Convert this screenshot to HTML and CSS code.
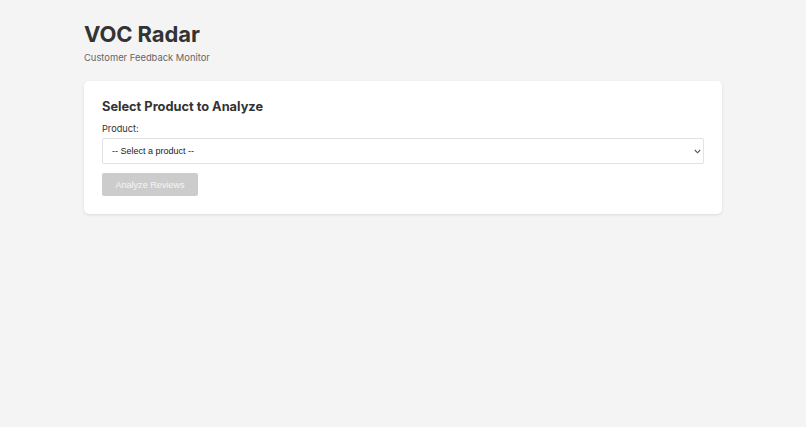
FILE: index.html
```html
<!DOCTYPE html>
<html lang="en">
<head>
<meta charset="utf-8">
<title>VOC Radar</title>
<link rel="stylesheet" href="styles.css">
</head>
<body>
<div class="container">
  <header class="header">
    <h1 class="title">VOC Radar</h1>
    <p class="subtitle">Customer Feedback Monitor</p>
  </header>
  <section class="card">
    <h2 class="card-title">Select Product to Analyze</h2>
    <label class="label" for="product">Product:</label>
    <div class="select-wrap">
      <select id="product" class="select">
        <option>-- Select a product --</option>
      </select>
      <svg class="chev" width="7" height="5" viewBox="0 0 7 5"><path d="M0.8 1 L3.5 3.8 L6.2 1" fill="none" stroke="#555" stroke-width="1.1"/></svg>
    </div>
    <button class="btn" disabled>Analyze Reviews</button>
  </section>
</div>
</body>
</html>
```
FILE: styles.css
```css
html, body {
  margin: 0;
  padding: 0;
  background: #f4f4f4;
  height: 100%;
}
body {
  font-family: Inter, "Noto Sans", sans-serif;
  color: #333;
}
.container {
  width: 638px;
  margin: 0 auto;
  padding-top: 20px;
}
.header {
  margin-bottom: 16px;
}
.title {
  font-size: 22px;
  font-weight: 700;
  margin: 0;
  line-height: 28px;
  color: #333;
  letter-spacing: -0.1px;
}
.subtitle {
  font-size: 9.4px;
  color: #666;
  margin: 3px 0 0 0;
  line-height: 14px;
}
.card {
  background: #fff;
  border-radius: 5px;
  box-shadow: 0 1px 3px rgba(0,0,0,0.1);
  padding: 17px 18px 18px 18px;
  display: flex;
  flex-direction: column;
  align-items: flex-start;
}
.card-title {
  font-size: 12.8px;
  font-weight: 700;
  margin: 0 0 7px 0;
  line-height: 18px;
  color: #333;
}
.label {
  font-size: 9.2px;
  line-height: 12px;
  color: #333;
  margin-bottom: 3px;
}
.select-wrap {
  position: relative;
  width: 100%;
  margin-bottom: 9px;
}
.select {
  appearance: none;
  -webkit-appearance: none;
  width: 100%;
  height: 26px;
  box-sizing: border-box;
  border: 1px solid #e2e2e2;
  border-radius: 2px;
  background: #fff;
  font-family: "Liberation Sans", Arial, sans-serif;
  font-size: 9px;
  color: #222;
  padding: 0 9px;
  margin: 0;
}
.chev {
  position: absolute;
  right: 3px;
  top: 11px;
  pointer-events: none;
}
.btn {
  background: #cccccc;
  color: #f6f6f6;
  border: none;
  border-radius: 2px;
  font-family: "Liberation Sans", Arial, sans-serif;
  font-size: 9.1px;
  height: 23px;
  width: 96px;
  padding: 0;
  margin: 0;
}
```
